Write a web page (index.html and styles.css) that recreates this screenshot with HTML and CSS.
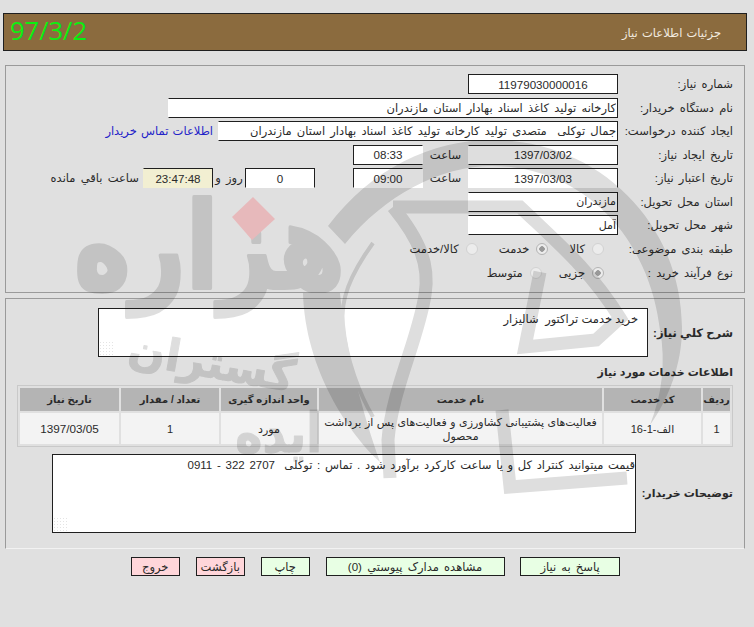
FILE: index.html
```html
<!DOCTYPE html>
<html lang="fa" dir="rtl">
<head>
    <meta charset="UTF-8">
    <title>جزئیات اطلاعات نیاز</title>
    <link rel="stylesheet" href="styles.css">
</head>
<body>
    <div class="topbar">
        <span class="topbar-title">جزئیات اطلاعات نیاز</span>
        <span class="topbar-date" dir="ltr">97/3/2</span>
    </div>

    <div class="panel panel-info">
        <div class="row">
            <label class="row-label">شماره نیاز:</label>
            <input class="field field-date" type="text" value="11979030000016" readonly>
        </div>
        <div class="row">
            <label class="row-label">نام دستگاه خریدار:</label>
            <input class="field field-start field-wide no-left" type="text" value="کارخانه تولید کاغذ اسناد بهادار استان مازندران" readonly>
        </div>
        <div class="row">
            <label class="row-label">ایجاد کننده درخواست:</label>
            <input class="field field-start field-creator no-left" type="text" value="جمال توکلی  متصدی تولید کارخانه تولید کاغذ اسناد بهادار استان مازندران" readonly>
            <a class="contact-link" href="#">اطلاعات تماس خریدار</a>
        </div>
        <div class="row">
            <label class="row-label">تاریخ ایجاد نیاز:</label>
            <input class="field field-date no-left" type="text" value="1397/03/02" readonly>
            <span class="time-label">ساعت</span>
            <input class="field field-time no-right" type="text" value="08:33" readonly>
        </div>
        <div class="row">
            <label class="row-label">تاریخ اعتبار نیاز:</label>
            <input class="field field-date no-left no-bottom" type="text" value="1397/03/03" readonly>
            <span class="time-label">ساعت</span>
            <input class="field field-time no-right no-bottom" type="text" value="09:00" readonly>
            <input class="field field-days no-bottom" type="text" value="0" readonly>
            <span class="days-label">روز و</span>
            <input class="field field-left no-left no-bottom" type="text" value="23:47:48" readonly>
            <span class="left-label">ساعت باقي مانده</span>
        </div>
        <div class="row">
            <label class="row-label">استان محل تحویل:</label>
            <input class="field field-start field-city field-date no-left" type="text" value="مازندران" readonly>
        </div>
        <div class="row">
            <label class="row-label">شهر محل تحویل:</label>
            <input class="field field-start field-city field-date no-left" type="text" value="آمل" readonly>
        </div>
        <div class="row row-radio">
            <label class="row-label">طبقه بندی موضوعی:</label>
            <span class="choice choice-first"><input type="radio" name="cat" disabled><span>کالا</span></span>
            <span class="choice"><input type="radio" name="cat" checked disabled><span>خدمت</span></span>
            <span class="choice"><input type="radio" name="cat" disabled><span>کالا/خدمت</span></span>
        </div>
        <div class="row row-radio">
            <label class="row-label">نوع فرآیند خرید :</label>
            <span class="choice choice-first"><input type="radio" name="proc" checked disabled><span>جزیی</span></span>
            <span class="choice choice-near"><input type="radio" name="proc" disabled><span>متوسط</span></span>
        </div>
    </div>

    <div class="panel panel-detail">
        <div class="note-row">
            <label class="note-label note-label-short">شرح کلي نیاز:</label>
            <textarea class="note note-short" readonly>خرید خدمت تراکتور  شالیزار</textarea>
        </div>

        <h3 class="section-title">اطلاعات خدمات مورد نیاز</h3>

        <table class="items">
            <thead>
                <tr>
                    <th class="col-row">ردیف</th>
                    <th class="col-code">کد خدمت</th>
                    <th class="col-name">نام خدمت</th>
                    <th class="col-unit">واحد اندازه گیری</th>
                    <th class="col-qty">تعداد / مقدار</th>
                    <th>تاریخ نیاز</th>
                </tr>
            </thead>
            <tbody>
                <tr>
                    <td>1</td>
                    <td>الف-1-16</td>
                    <td>فعالیت‌های پشتیبانی کشاورزی و فعالیت‌های پس از برداشت محصول</td>
                    <td>مورد</td>
                    <td>1</td>
                    <td class="cell-date">1397/03/05</td>
                </tr>
            </tbody>
        </table>

        <div class="note-row note-row-buyer">
            <label class="note-label note-label-buyer">توضیحات خریدار:</label>
            <textarea class="note note-buyer" readonly>قیمت میتوانید کنتراد کل و یا ساعت کارکرد برآورد شود . تماس : توکلی  2707 322 - 0911</textarea>
        </div>
    </div>

    <div class="actions">
        <button class="btn btn-green btn-reply" type="button">پاسخ به نیاز</button>
        <button class="btn btn-green btn-docs" type="button">مشاهده مدارک پیوستي (0)</button>
        <button class="btn btn-green" type="button">چاپ</button>
        <button class="btn btn-red" type="button">بازگشت</button>
        <button class="btn btn-red" type="button">خروج</button>
    </div>

    <!-- مهر پس زمینه روی فرم -->
    <svg class="stamp" width="754" height="627" viewBox="0 0 754 627" aria-hidden="true">
        <g class="stamp-grey">
            <path d="M328 226C372 168 432 140 492 140C600 140 682 225 682 328C682 365 668 400 650 425C662 395 666 362 660 330C650 240 585 166 492 166C440 166 385 195 345 244Z"/>
            <path class="stamp-line" d="M393 207H520C560 245 590 270 620 318L596 340L525 347L540 272"/>
            <path class="stamp-line" d="M393 207C420 240 430 265 425 295C418 340 392 390 388 440L390 478"/>
            <path class="stamp-line" d="M502 410L510 487L627 478"/>
            <path class="stamp-thin" d="M373 243C350 275 340 300 343 325C346 360 360 395 373 417"/>
            <path d="M303 293L340 293C345 350 365 420 380 462C350 435 305 370 303 293Z"/>
            <text class="stamp-big" transform="translate(345 288) scale(1 1.25)">هزاره</text>
            <text class="stamp-mid" transform="translate(292 392) rotate(10)">گستران</text>
            <text class="stamp-small" transform="translate(322 452) scale(1 1.2)">ایده</text>
        </g>
        <polygon class="stamp-dot" points="253,197 275,219 252,240 232,217"/>
    </svg>
</body>
</html>
```

FILE: styles.css
```css
html, body {
    margin: 0;
    padding: 0;
}
body {
    position: relative;
    width: 754px;
    height: 627px;
    overflow: hidden;
    background: #e0e0e0;
    color: #2a2a2a;
    font-family: "Liberation Sans", "DejaVu Sans", sans-serif;
    font-size: 11.5px;
    word-spacing: 2px;
}

/* top bar */
.topbar {
    display: flex;
    justify-content: space-between;
    align-items: center;
    box-sizing: border-box;
    width: 744px;
    height: 38px;
    margin: 13px 7px 0 3px;
    padding: 2px 25px 0 6px;
    background: #8b6b3e;
    border: 1px solid #1f1f1f;
}
.topbar-title {
    color: #f3ece0;
    font-size: 11.5px;
    word-spacing: 1px;
}
.topbar-date {
    color: #0bef10;
    font-family: "Open Sans", sans-serif;
    font-size: 25.5px;
    line-height: 1;
    margin-top: -4px;
}

/* panels */
.panel {
    box-sizing: border-box;
    width: 740px;
    margin-right: 9px;
    border: 1px solid #9a9a9a;
}
.panel-info {
    height: 228px;
    margin-top: 14px;
    padding: 8px 11px 0 0;
    display: flex;
    flex-direction: column;
    gap: 3.5px;
}
.panel-detail {
    height: 251px;
    margin-top: 5px;
    padding: 9px 11px 0 0;
    border-bottom-color: #f2f2f2;
}

/* form rows */
.row {
    display: flex;
    align-items: center;
    height: 20px;
}
.row-radio {
    height: 19px;
    margin-top: 1px;
}
.row-label {
    flex: 0 0 115px;
    white-space: nowrap;
}
.field {
    box-sizing: border-box;
    height: 20px;
    padding: 0 1px;
    background: #fff;
    border: 1px solid #1f1f1f;
    color: #2a2a2a;
    font: 11.6px "Liberation Sans", "DejaVu Sans", sans-serif;
    text-align: center;
    outline: none;
}
.field-start {
    text-align: right;
    font-size: 11.5px;
    word-spacing: 2px;
}
.field-city {
    font-size: 11px;
}
.field-date { width: 150px; }
.field-wide { width: 450px; }
.field-creator { width: 400px; }
.field-time { width: 70px; }
.field-days { width: 70px; margin-right: 38px; }
.field-left { width: 70px; background: #f2efd2; }
.no-left { border-left-color: transparent; }
.no-right { border-right-color: transparent; }
.no-bottom { border-bottom-color: transparent; }

.contact-link {
    margin-right: 5px;
    color: #2323c8;
    text-decoration: none;
    white-space: nowrap;
    word-spacing: 1px;
}
.time-label {
    width: 45px;
    text-align: center;
}
.days-label {
    width: 32px;
    text-align: center;
    white-space: nowrap;
}
.left-label {
    margin-right: 4px;
    white-space: nowrap;
}

/* radios */
.choice {
    display: flex;
    align-items: center;
    gap: 7px;
    margin-right: 21px;
    white-space: nowrap;
}
.choice-first {
    margin-right: 14px;
}
.choice-near {
    margin-right: 17px;
}
.choice input {
    appearance: none;
    box-sizing: border-box;
    width: 12px;
    height: 12px;
    margin: 0;
    border: 1px solid #d2d2d2;
    border-radius: 50%;
    background: #ececec;
}
.choice input:checked {
    background: radial-gradient(circle, #999 0 2.5px, #ececec 3px);
    border-color: #b4b4b4;
}

/* description boxes */
.note-row {
    display: flex;
    align-items: center;
}
.note-label {
    font-size: 11.5px;
    font-weight: bold;
    white-space: nowrap;
    word-spacing: 0;
}
.note-label-short { flex: 0 0 85px; }
.note-label-buyer { flex: 0 0 97px; font-size: 11px; }
.note {
    box-sizing: border-box;
    display: block;
    background: #fff;
    border: 1px solid #1f1f1f;
    color: #2a2a2a;
    font: 11.5px "Liberation Sans", "DejaVu Sans", sans-serif;
    outline: none;
}
.note::-webkit-resizer {
    background-image: radial-gradient(#e4e4e4 1px, transparent 1px);
    background-size: 3px 3px;
}
.note-short {
    width: 550px;
    height: 49px;
    padding: 3px 9px;
    word-spacing: 0;
}
.note-buyer {
    width: 584px;
    height: 79px;
    padding: 3px 0;
    word-spacing: 1.5px;
}
.note-row-buyer {
    margin-top: 7px;
}

.section-title {
    margin: 8px 0 5px;
    font-size: 11px;
    line-height: 15px;
    word-spacing: 0;
}

/* items table */
.items {
    box-sizing: border-box;
    width: 716px;
    border: 1px solid #c9c9c9;
    border-spacing: 2px;
    table-layout: fixed;
}
.items th {
    height: 23px;
    padding: 0;
    background: #b4b4b4;
    font-size: 10px;
    font-weight: bold;
    word-spacing: 0;
}
.items td {
    height: 31px;
    padding: 0;
    background: #f3f3f3;
    font-size: 11px;
    line-height: 14px;
    text-align: center;
    word-spacing: 0.5px;
}
.items .cell-date {
    font-size: 11.7px;
}
.col-row { width: 27px; }
.col-code { width: 97px; }
.col-name { width: 283px; }
.col-unit { width: 96px; }
.col-qty { width: 98px; }

/* bottom buttons */
.actions {
    display: flex;
    gap: 15.5px;
    margin: 8px 134px 0 0;
}
.btn {
    box-sizing: border-box;
    width: 49.5px;
    height: 19px;
    padding: 0;
    border: 1px solid #1f1f1f;
    color: #2a2a2a;
    font: 11.5px "Liberation Sans", "DejaVu Sans", sans-serif;
    word-spacing: 2px;
}
.btn-green { background: #e8ffe4; }
.btn-red { background: #ffd6da; }
.btn-reply { width: 100px; }
.btn-docs { width: 179px; }

/* stamp over the form */
.stamp {
    position: absolute;
    top: 0;
    left: 0;
    pointer-events: none;
}
.stamp-grey {
    opacity: 0.13;
    fill: #000;
}
.stamp-line {
    fill: none;
    stroke: #000;
    stroke-width: 13;
}
.stamp-thin {
    fill: none;
    stroke: #000;
    stroke-width: 4;
}
.stamp-big,
.stamp-mid,
.stamp-small {
    font-family: "DejaVu Sans", sans-serif;
    font-weight: bold;
    stroke: #000;
    stroke-linejoin: round;
}
.stamp-big {
    font-size: 96px;
    stroke-width: 3;
}
.stamp-mid {
    font-size: 44px;
    stroke-width: 1;
}
.stamp-small {
    font-size: 46px;
    stroke-width: 1;
}
.stamp-dot {
    fill: #e7b9bb;
}
```
